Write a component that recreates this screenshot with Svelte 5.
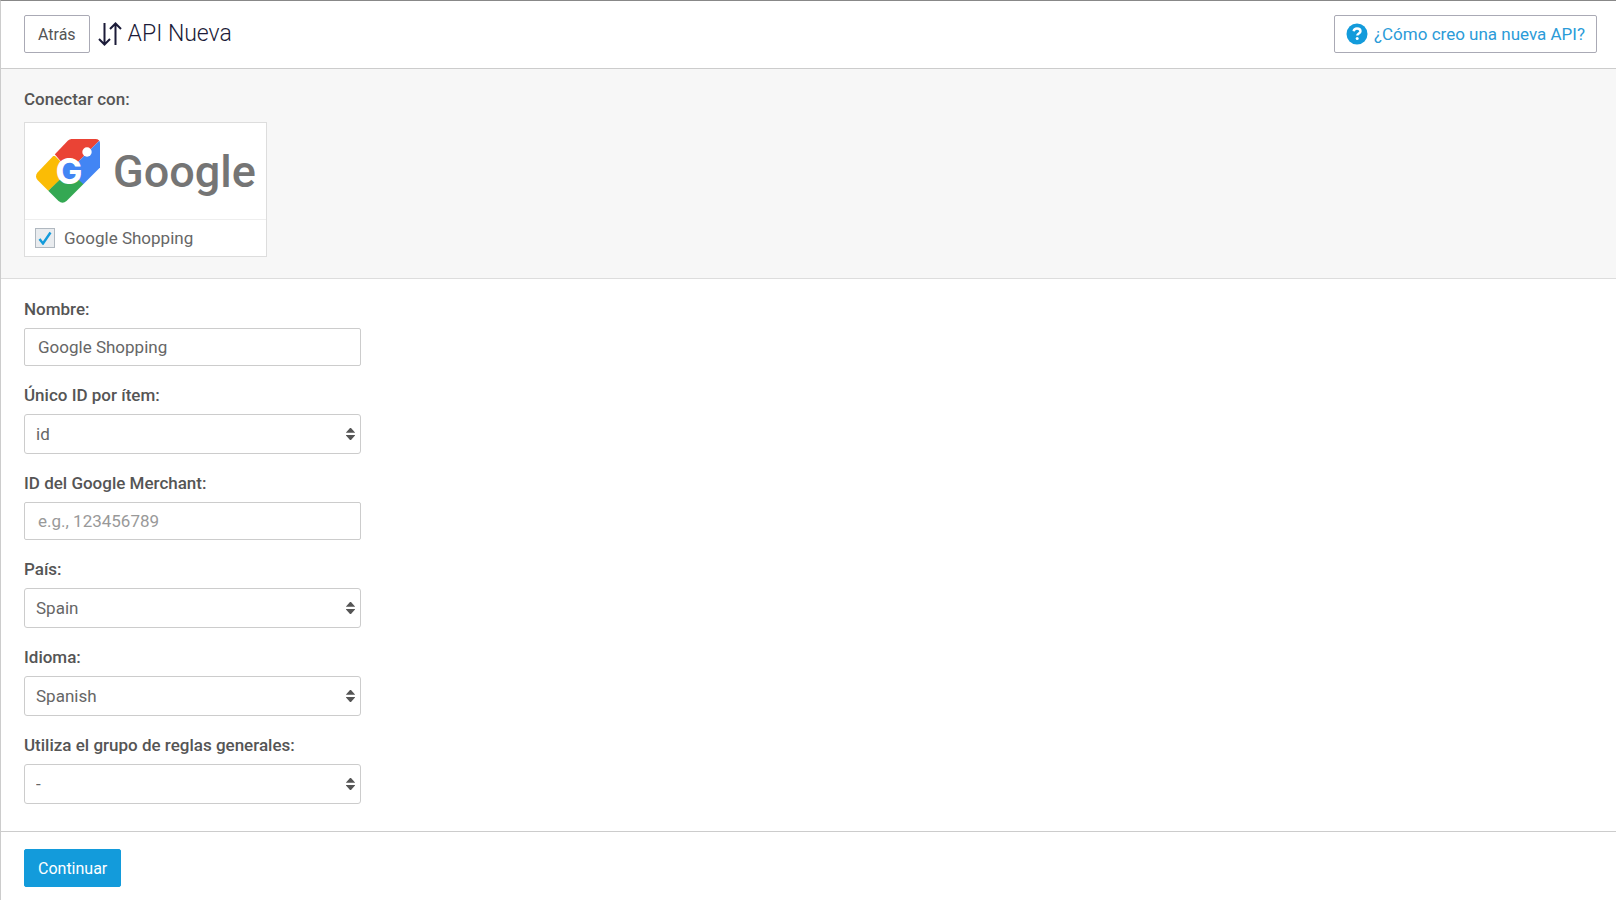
<script>
  let shopping = true
  let name = 'Google Shopping'
  let merchantId = ''
  let uniqueId = 'id'
  let country = 'Spain'
  let language = 'Spanish'
  let ruleGroup = '-'
</script>

<style>
  :global(body) {
    margin: 0;
    font-family: Roboto, 'Liberation Sans', sans-serif;
    font-size: 17px;
    color: #555;
    background: #fff;
  }

  .page {
    min-height: 100vh;
    box-sizing: border-box;
    border-top: 1px solid #888;
    border-left: 1px solid #ccc;
  }

  header {
    display: flex;
    align-items: center;
    gap: 8px;
    padding: 14px 19px 15px 23px;
    border-bottom: 1px solid #ccc;
  }

  h1 {
    display: flex;
    align-items: center;
    gap: 6px;
    margin: 0;
    font-size: 23px;
    line-height: 32px;
    font-weight: 300;
    color: #1b1b38;
  }

  .btn {
    box-sizing: border-box;
    height: 38px;
    padding: 0 13px;
    border: 1px solid #aaaab5;
    border-radius: 2px;
    font-family: inherit;
    font-size: 16px;
    color: #555;
    background: #fff;
    cursor: pointer;
  }

  .help {
    display: flex;
    align-items: center;
    gap: 6px;
    margin-left: auto;
    padding: 0 11px;
    font-size: 17px;
    color: #2b9bd8;
    text-decoration: none;
  }

  .primary {
    border-color: #139bdb;
    color: #fff;
    background: #139bdb;
  }

  .connect {
    padding: 20px 23px 21px;
    border-bottom: 1px solid #ddd;
    background: #f7f7f7;
  }

  h2,
  .field label {
    display: block;
    margin: 0 0 9px;
    font-size: 17px;
    line-height: 20px;
    font-weight: 500;
  }

  h2 {
    margin-bottom: 13px;
  }

  .card {
    display: block;
    box-sizing: border-box;
    width: 243px;
    border: 1px solid #ddd;
    background: #fff;
    cursor: pointer;
  }

  .logo {
    display: flex;
    align-items: center;
    height: 96px;
    padding-left: 10px;
    border-bottom: 1px solid #eee;
  }

  .logo svg {
    display: block;
  }

  .option {
    display: flex;
    align-items: center;
    gap: 9px;
    height: 36px;
    padding: 0 10px;
    color: #666;
  }

  .check,
  .select {
    display: grid;
    align-items: center;
  }

  .check > *,
  .select > * {
    grid-area: 1 / 1;
  }

  .check svg,
  .select svg {
    pointer-events: none;
    z-index: 1;
  }

  .check svg {
    justify-self: center;
  }

  .check input {
    appearance: none;
    box-sizing: border-box;
    width: 20px;
    height: 20px;
    margin: 0;
    border: 1px solid #b0b8c0;
    background: #e9ecef;
  }

  form {
    padding: 20px 23px 27px;
    border-bottom: 1px solid #ccc;
  }

  .field {
    max-width: 337px;
    margin-bottom: 19px;
  }

  .field:last-child {
    margin-bottom: 0;
  }

  .field input,
  .field select {
    appearance: none;
    box-sizing: border-box;
    width: 100%;
    height: 38px;
    margin: 0;
    padding: 0 13px;
    border: 1px solid #ccc;
    border-radius: 2px;
    font-family: inherit;
    font-size: 17px;
    color: #666;
    background: #fff;
  }

  .field input {
    display: block;
  }

  .field input::placeholder {
    color: #999;
  }

  .field select {
    height: 40px;
    padding: 0 24px 0 11px;
    border-radius: 3px;
  }

  .select svg {
    justify-self: end;
    margin-right: 5px;
  }

  footer {
    padding: 17px 23px 12px;
  }
</style>

{#snippet arrows()}
  <svg width="11" height="14" viewBox="0 0 11 14" aria-hidden="true">
    <path d="M1 5.4 5 1h1l4 4.4v.4H1zM1 8h9v.4L6 13H5L1 8.400z" fill="#555" />
  </svg>
{/snippet}

<div class="page">
  <header>
    <button class="btn" type="button">Atrás</button>
    <h1>
      <svg width="24" height="24" viewBox="0 0 24 24" fill="none" stroke="#1b1b38" stroke-width="2" aria-hidden="true">
        <path d="M6.500 1v21M1 17l5.500 5.500L12 17M17.500 23V2M12 7l5.500-5.500L23 7" />
      </svg>
      API Nueva
    </h1>
    <a class="btn help" href="#ayuda">
      <svg width="22" height="22" viewBox="0 0 22 22" aria-hidden="true">
        <circle cx="11" cy="11" r="10.500" fill="#139bdb" />
        <path d="M7.600 8.300C8 6.300 9.300 5.500 11 5.500c2 0 3.500 1 3.500 2.800 0 2.300-3.200 2.200-3.200 4.300" fill="none" stroke="#fff" stroke-width="2.400" />
        <circle cx="11.200" cy="15.600" r="1.500" fill="#fff" />
      </svg>
      ¿Cómo creo una nueva API?
    </a>
  </header>

  <section class="connect">
    <h2>Conectar con:</h2>
    <label class="card">
      <span class="logo">
        <svg width="230" height="80" viewBox="0 0 230 80" role="img" aria-label="Google">
          <defs>
            <clipPath id="tag">
              <path d="M36.500 8H60.500Q65 8 65 12.500V36.500L31.500 70Q27.500 73.500 23.500 70L2.500 49Q-.5 45 2.500 41.500L33 9.500Q34.500 8 36.500 8z" />
            </clipPath>
          </defs>
          <g clip-path="url(#tag)">
            <path d="M0 0h66v8L34 40z" fill="#ea4335" />
            <path d="M20 25 35 40 13 60 0 60V25z" fill="#fbbc05" />
            <path d="M35 39 13 60V75H34L49 53z" fill="#34a853" />
            <path d="M66 8v54H58L34 40z" fill="#4285f4" />
            <circle cx="34" cy="40" r="9" fill="#4285f4" />
          </g>
          <circle cx="52" cy="21" r="4.700" fill="#fff" />
          <text x="34" y="53" text-anchor="middle" font-family="Inter, sans-serif" font-size="36" font-weight="700" fill="#fff">G</text>
          <text x="78" y="56" font-family="Roboto, sans-serif" font-size="45" font-weight="500" fill="#757575">Google</text>
        </svg>
      </span>
      <span class="option">
        <span class="check">
          <input type="checkbox" bind:checked={shopping} />
          {#if shopping}
            <svg width="14" height="14" viewBox="0 0 14 14" aria-hidden="true">
              <path d="M1.500 8 5 12.500 12.500 1.500" fill="none" stroke="#139bdb" stroke-width="2.400" />
            </svg>
          {/if}
        </span>
        Google Shopping
      </span>
    </label>
  </section>

  <form id="api-form" on:submit|preventDefault>
    <div class="field">
      <label for="name">Nombre:</label>
      <input id="name" type="text" bind:value={name} />
    </div>

    <div class="field">
      <label for="unique-id">Único ID por ítem:</label>
      <div class="select">
        <select id="unique-id" bind:value={uniqueId}>
          <option>id</option>
        </select>
        {@render arrows()}
      </div>
    </div>

    <div class="field">
      <label for="merchant-id">ID del Google Merchant:</label>
      <input id="merchant-id" type="text" placeholder="e.g., 123456789" bind:value={merchantId} />
    </div>

    <div class="field">
      <label for="country">País:</label>
      <div class="select">
        <select id="country" bind:value={country}>
          <option>Spain</option>
        </select>
        {@render arrows()}
      </div>
    </div>

    <div class="field">
      <label for="language">Idioma:</label>
      <div class="select">
        <select id="language" bind:value={language}>
          <option>Spanish</option>
        </select>
        {@render arrows()}
      </div>
    </div>

    <div class="field">
      <label for="rule-group">Utiliza el grupo de reglas generales:</label>
      <div class="select">
        <select id="rule-group" bind:value={ruleGroup}>
          <option>-</option>
        </select>
        {@render arrows()}
      </div>
    </div>
  </form>

  <footer>
    <button class="btn primary" type="submit" form="api-form">Continuar</button>
  </footer>
</div>
